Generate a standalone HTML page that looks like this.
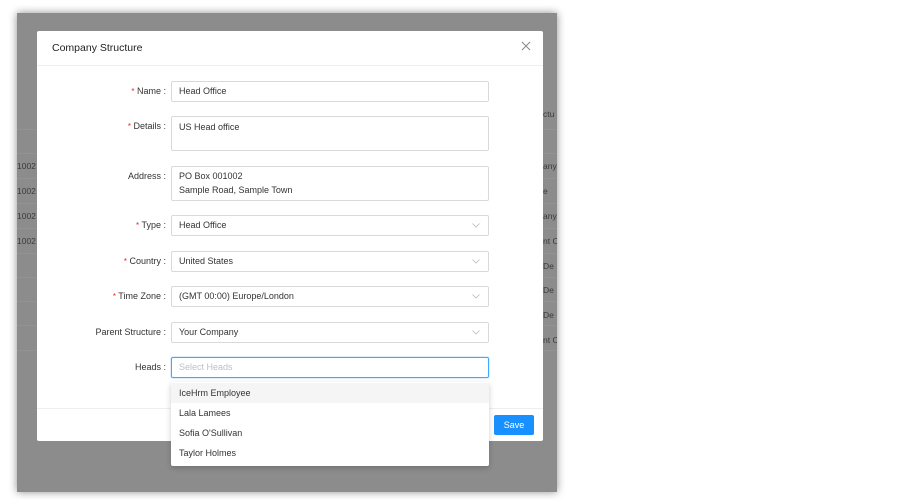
<!DOCTYPE html>
<html><head><style>
*{box-sizing:border-box;margin:0;padding:0}
body{width:900px;height:500px;background:#fff;position:relative;overflow:hidden;font-family:"Liberation Sans",sans-serif;font-size:9px;color:#333}
.bd{position:absolute;left:17px;top:13px;width:540px;height:479px;background:#8c8c8c;box-shadow:0 0 8px rgba(0,0,0,.45);overflow:hidden}
.bt{position:absolute;color:#3a3a3a;font-size:8.5px;white-space:nowrap}
.hl{position:absolute;left:0;width:540px;height:1px;background:#939393}
.modal{position:absolute;left:37px;top:31px;width:506px;height:410px;background:#fff;border-radius:2px}
.hdr{height:35px;border-bottom:1px solid #eee;padding:11px 15px;font-size:10.5px;color:#222}
.x{position:absolute;right:12px;top:10px;width:10px;height:10px}
.lab{position:absolute;right:377px;font-size:9px;color:#333;text-align:right;white-space:nowrap}
.lab b{color:#f5222d;font-weight:normal;font-size:8px}
.inp{position:absolute;left:134px;width:318px;border:1px solid #d9d9d9;border-radius:2px;padding:0 7px;font-size:9px;color:#333;line-height:19px}
.chev{position:absolute;right:8px;top:7px;width:8px;height:5px}
.ftr{position:absolute;left:0;top:377px;width:506px;border-top:1px solid #eee}
.save{position:absolute;left:457px;top:384px;width:40px;height:20px;background:#1890ff;color:#fff;border-radius:2px;text-align:center;line-height:20px;font-size:9px}
.dd{position:absolute;left:171px;top:382px;width:318px;height:84px;background:#fff;box-shadow:0 2px 6px rgba(0,0,0,.2);border-radius:2px;padding-top:1px}
.dd div{height:20px;line-height:20px;padding-left:8px;font-size:9px;color:#333}
</style></head><body>
<div class="bd">
<div class="hl" style="top:116px"></div>
<div class="hl" style="top:140px"></div><div class="hl" style="top:165px"></div><div class="hl" style="top:190px"></div><div class="hl" style="top:215px"></div><div class="hl" style="top:240px"></div><div class="hl" style="top:264px"></div><div class="hl" style="top:288px"></div><div class="hl" style="top:312px"></div><div class="hl" style="top:337px"></div>
<div class="bt" style="left:0;top:148px">1002</div><div class="bt" style="left:0;top:173px">1002</div><div class="bt" style="left:0;top:198px">1002</div><div class="bt" style="left:0;top:223px">1002</div>
<div class="bt" style="left:526px;top:96px">ctu</div><div class="bt" style="left:526px;top:148px">any</div><div class="bt" style="left:526px;top:173px">e</div><div class="bt" style="left:526px;top:198px">any</div><div class="bt" style="left:526px;top:223px">nt C</div><div class="bt" style="left:526px;top:248px">De</div><div class="bt" style="left:526px;top:272px">De</div><div class="bt" style="left:526px;top:297px">De</div><div class="bt" style="left:526px;top:322px">nt C</div>
</div>
<div class="modal">
<div class="hdr">Company Structure</div>
<svg class="x" viewBox="0 0 10 10"><path d="M1 1L9 9M9 1L1 9" stroke="#888" stroke-width="1"/></svg>
<div class="lab" style="top:55px"><b>*</b> Name :</div>
<div class="inp" style="top:50px;height:21px">Head Office</div>
<div class="lab" style="top:90px"><b>*</b> Details :</div>
<div class="inp" style="top:85px;height:35px;line-height:1.3;padding-top:5px">US Head office</div>
<div class="lab" style="top:140px">Address :</div>
<div class="inp" style="top:135px;height:35px;line-height:1.5;padding-top:3px">PO Box 001002<br>Sample Road, Sample Town</div>
<div class="lab" style="top:189px"><b>*</b> Type :</div>
<div class="inp" style="top:184px;height:21px">Head Office<svg class="chev" viewBox="0 0 8 5"><path d="M0.5 0.5L4 4L7.5 0.5" fill="none" stroke="#bbb" stroke-width="0.8"/></svg></div>
<div class="lab" style="top:225px"><b>*</b> Country :</div>
<div class="inp" style="top:220px;height:21px">United States<svg class="chev" viewBox="0 0 8 5"><path d="M0.5 0.5L4 4L7.5 0.5" fill="none" stroke="#bbb" stroke-width="0.8"/></svg></div>
<div class="lab" style="top:260px"><b>*</b> Time Zone :</div>
<div class="inp" style="top:255px;height:21px">(GMT 00:00) Europe/London<svg class="chev" viewBox="0 0 8 5"><path d="M0.5 0.5L4 4L7.5 0.5" fill="none" stroke="#bbb" stroke-width="0.8"/></svg></div>
<div class="lab" style="top:296px">Parent Structure :</div>
<div class="inp" style="top:291px;height:21px">Your Company<svg class="chev" viewBox="0 0 8 5"><path d="M0.5 0.5L4 4L7.5 0.5" fill="none" stroke="#bbb" stroke-width="0.8"/></svg></div>
<div class="lab" style="top:331px">Heads :</div>
<div class="inp" style="top:326px;height:21px;border-color:#40a9ff;color:#bfbfbf;box-shadow:0 0 0 1px rgba(24,144,255,.15)">Select Heads</div>
<div class="ftr"></div>
<div class="save">Save</div>
</div>
<div class="dd"><div style="background:#f5f5f5">IceHrm Employee</div><div>Lala Lamees</div><div>Sofia O'Sullivan</div><div>Taylor Holmes</div></div>
</body></html>
